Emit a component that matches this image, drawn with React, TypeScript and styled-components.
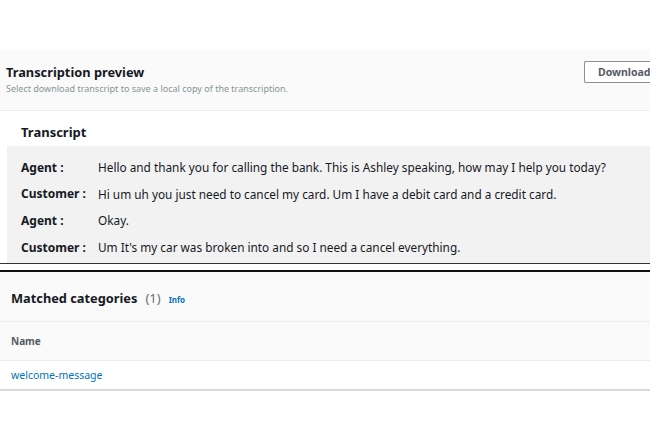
import React from 'react';
import styled, { createGlobalStyle } from 'styled-components';

const GlobalStyle = createGlobalStyle`
  html, body {
    margin: 0;
    padding: 0;
    background: #ffffff;
    font-family: 'Noto Sans', 'Open Sans', Arial, sans-serif;
    color: #16191f;
  }
`;

const lines = [
  { speaker: 'Agent', text: 'Hello and thank you for calling the bank. This is Ashley speaking, how may I help you today?' },
  { speaker: 'Customer', text: 'Hi um uh you just need to cancel my card. Um I have a debit card and a credit card.' },
  { speaker: 'Agent', text: 'Okay.' },
  { speaker: 'Customer', text: "Um It's my car was broken into and so I need a cancel everything." },
];

export default function App() {
  return (
    <Page>
      <GlobalStyle />
      <Preview>
        <PreviewHeader>
          <div>
            <Title>Transcription preview</Title>
            <Subtitle>Select download transcript to save a local copy of the transcription.</Subtitle>
          </div>
          <DownloadButton>Download</DownloadButton>
        </PreviewHeader>
        <TranscriptBlock>
          <SectionTitle>Transcript</SectionTitle>
          <TranscriptBox>
            {lines.map((l, i) => (
              <Line key={i}>
                <Speaker>{l.speaker} :</Speaker>
                <Utterance>{l.text}</Utterance>
              </Line>
            ))}
          </TranscriptBox>
        </TranscriptBlock>
      </Preview>
      <Divider />
      <Categories>
        <CategoriesHeader>
          <Title>Matched categories</Title>
          <Count>(1)</Count>
          <InfoLink>Info</InfoLink>
        </CategoriesHeader>
        <TableHead>Name</TableHead>
        <TableRow>
          <Link>welcome-message</Link>
        </TableRow>
      </Categories>
    </Page>
  );
}

const Page = styled.div`
  width: 650px;
  height: 433px;
  padding-top: 50px;
  box-sizing: border-box;
  overflow: hidden;
`;

const Preview = styled.section`
  display: flex;
  flex-direction: column;
`;

const PreviewHeader = styled.header`
  display: flex;
  justify-content: space-between;
  align-items: flex-start;
  background: #fafafa;
  border-bottom: 1px solid #eaeded;
  padding: 12px 0 0 6px;
  height: 61px;
  box-sizing: border-box;
`;

const Title = styled.h2`
  margin: 0;
  font-size: 12.8px;
  font-weight: 700;
  line-height: 20px;
  color: #16191f;
`;

const Subtitle = styled.p`
  margin: 0;
  font-size: 9px;
  line-height: 14px;
  color: #879596;
`;

const DownloadButton = styled.button`
  margin-top: -1px;
  width: 66px;
  height: 22px;
  background: #ffffff;
  border: 1px solid #8c9191;
  border-right: none;
  border-radius: 2px 0 0 2px;
  font-family: inherit;
  font-size: 10.5px;
  font-weight: 700;
  color: #545b64;
  text-align: left;
  padding: 0 0 0 13px;
  white-space: nowrap;
`;

const TranscriptBlock = styled.div`
  padding-left: 7px;
`;

const SectionTitle = styled.h3`
  margin: 0;
  height: 35px;
  box-sizing: border-box;
  padding: 13px 0 0 14px;
  line-height: 16px;
  font-size: 13px;
  font-weight: 700;
  color: #16191f;
`;

const TranscriptBox = styled.div`
  background: #f2f2f2;
  padding: 8px 0 0 14px;
  height: 117px;
  box-sizing: border-box;
  display: flex;
  flex-direction: column;
`;

const Line = styled.div`
  display: grid;
  grid-template-columns: 77px 1fr;
  height: 26.6px;
  align-items: center;
  font-size: 11.8px;
`;

const Speaker = styled.span`
  font-weight: 700;
  font-size: 12px;
  color: #16191f;
`;

const Utterance = styled.span`
  color: #16191f;
  white-space: nowrap;
`;

const Divider = styled.div`
  height: 6px;
  border-top: 1px solid #333;
  border-bottom: 2px solid #111;
`;

const Categories = styled.section`
  border-bottom: 2px solid #d5dbdb;
`;

const CategoriesHeader = styled.header`
  display: flex;
  align-items: baseline;
  gap: 8px;
  background: #fafafa;
  height: 50px;
  box-sizing: border-box;
  padding: 16px 0 0 11px;
  border-bottom: 1px solid #eaeded;
`;

const Count = styled.span`
  font-size: 13px;
  color: #687078;
`;

const InfoLink = styled.span`
  font-size: 8px;
  font-weight: 700;
  color: #0073bb;
`;

const TableHead = styled.div`
  background: #fafafa;
  height: 38px;
  display: flex;
  align-items: center;
  padding-left: 11px;
  font-size: 10px;
  font-weight: 700;
  color: #545b64;
  border-bottom: 1px solid #eaeded;
`;

const TableRow = styled.div`
  height: 28px;
  display: flex;
  align-items: center;
  padding-left: 11px;
`;

const Link = styled.span`
  font-size: 10.5px;
  color: #0073bb;
`;
